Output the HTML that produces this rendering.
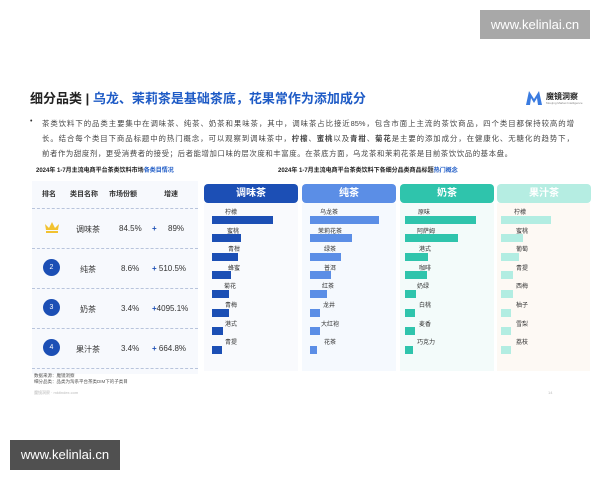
<!DOCTYPE html><html><head><meta charset="utf-8"><style>
body{margin:0;width:600px;height:480px;background:#fff;position:relative;overflow:hidden;font-family:"Liberation Sans","Noto Sans CJK SC",sans-serif;color:#333}
.a{position:absolute}
.wm{position:absolute;color:#fff;font-size:13px;text-align:center;line-height:29px}
.t{font-size:6px;white-space:nowrap}
.hd{position:absolute;top:184px;height:19px;width:94px;border-radius:4px;color:#fff;font-size:10px;font-weight:bold;text-align:center;line-height:19px}
.bar{position:absolute;height:8px}
.lb{position:absolute;font-size:6px;color:#333}
.row{position:absolute;left:32px;width:166px;height:39px;border-bottom:1px dashed #b8c4dc;font-size:8px}
.row span{position:absolute;top:15px}
.c{position:absolute;left:11px;top:10px;width:17px;height:17px;border-radius:50%;background:#1c4fb5;color:#fff;font-size:7px;text-align:center;line-height:17px}
.pl{position:absolute;left:42px;width:532px;font-size:7.4px;color:#444;white-space:nowrap;text-align:justify;text-align-last:justify}
</style></head><body>
<div class="wm" style="left:480px;top:10px;width:110px;background:#a8a8a8">www.kelinlai.cn</div>
<div class="wm" style="left:10px;top:440px;width:110px;height:30px;background:#505050">www.kelinlai.cn</div>

<div class="a" style="left:30px;top:88px;font-size:13px;font-weight:bold;white-space:nowrap"><span style="color:#222">细分品类 | </span><span style="color:#1e5bc6">乌龙、茉莉茶是基础茶底，花果常作为添加成分</span></div>
<svg class="a" style="left:525px;top:89px" width="18" height="17"><path d="M1 16 L4 2 L9 10 L14 2 L17 16 L13 16 L12 9 L9 14 L6 9 L5 16Z" fill="#3a7be0"/></svg>
<div class="a" style="left:546px;top:91px;font-size:8px;font-weight:bold;color:#222">魔镜洞察</div>
<div class="a" style="left:546px;top:101px;font-size:3px;color:#888">Moojing Market Intelligence</div>

<div class="a" style="left:30px;top:118px;font-size:7px">•</div>
<div class="pl" style="top:118px">茶类饮料下的品类主要集中在调味茶、纯茶、奶茶和果味茶，其中，调味茶占比接近85%，包含市面上主流的茶饮商品，四个类目都保持较高的增</div>
<div class="pl" style="top:133px">长。结合每个类目下商品标题中的热门概念，可以观察到调味茶中，<b>柠檬</b>、<b>蜜桃</b>以及<b>青柑</b>、<b>菊花</b>是主要的添加成分，在健康化、无糖化的趋势下，</div>
<div class="pl" style="top:148px;width:470px">前者作为甜度剂，更受消费者的接受；后者能增加口味的层次度和丰富度。在茶底方面，乌龙茶和茉莉花茶是目前茶饮饮品的基本盘。</div>

<div class="a t" style="left:36px;top:165px;font-weight:bold;color:#222">2024年 1-7月主流电商平台茶类饮料市场<span style="color:#1e5bc6">各类目情况</span></div>
<div class="a t" style="left:278px;top:165px;font-weight:bold;color:#222">2024年 1-7月主流电商平台茶类饮料下各细分品类商品标题<span style="color:#1e5bc6">热门概念</span></div>

<div class="a" style="left:32px;top:181px;width:166px;height:193px;background:#f7f9fd"></div>
<div class="row" style="top:181px;height:27px;font-weight:bold;font-size:7px"><span style="left:10px;top:8px">排名</span><span style="left:38px;top:8px">类目名称</span><span style="left:77px;top:8px">市场份额</span><span style="left:132px;top:8px">增速</span></div>
<div class="row" style="top:209px"><svg class="a" style="left:12px;top:12px" width="16" height="12"><path d="M1 3 L5 7 L8 1 L11 7 L15 3 L14 9 L2 9Z M2 10 H14 V12 H2Z" fill="#f2c230"/></svg><span style="left:44px">调味茶</span><span style="left:87px">84.5%</span><span style="left:120px;color:#1c4fb5;font-weight:bold">+</span><span style="left:136px">89%</span></div>
<div class="row" style="top:249px"><div class="c">2</div><span style="left:48px">纯茶</span><span style="left:89px">8.6%</span><span style="left:120px"><b style="color:#1c4fb5">+</b> 510.5%</span></div>
<div class="row" style="top:289px"><div class="c">3</div><span style="left:48px">奶茶</span><span style="left:89px">3.4%</span><span style="left:120px"><b style="color:#1c4fb5">+</b>4095.1%</span></div>
<div class="row" style="top:329px"><div class="c">4</div><span style="left:44px">果汁茶</span><span style="left:89px">3.4%</span><span style="left:120px"><b style="color:#1c4fb5">+</b> 664.8%</span></div>
<div class="a" style="left:34px;top:373px;font-size:4.5px;line-height:6px;color:#555">数据来源：魔镜洞察<br>细分品类：品类为淘系平台茶类DIM下的子类目</div>
<div class="a" style="left:34px;top:390px;font-size:4px;color:#bbb">魔镜洞察 · mktindex.com</div>

<div class="a" style="left:204px;top:203px;width:94px;height:168px;background:#f9fafd"></div>
<div class="a" style="left:302px;top:203px;width:94px;height:168px;background:#f5f9fe"></div>
<div class="a" style="left:400px;top:203px;width:94px;height:168px;background:#f3fbfa"></div>
<div class="a" style="left:497px;top:203px;width:93px;height:168px;background:#fdf9f4"></div>
<div class="hd" style="left:204px;background:#1c4fb5">调味茶</div>
<div class="hd" style="left:302px;background:#5b8ee6">纯茶</div>
<div class="hd" style="left:400px;background:#2fc4ac">奶茶</div>
<div class="hd" style="left:497px;background:#b5ede2;color:#fff">果汁茶</div>

<div id="bars"></div>
<script>
var cols=[[212,"#1c4fb5",[61,29,26,19,17,17,11,10],["柠檬","蜜桃","青柑","蜂蜜","菊花","青梅","港式","青提"],[225,227,228,228,224,225,225,225]],
[310,"#5b8ee6",[69,42,31,21,17,10,10,7],["乌龙茶","茉莉花茶","绿茶","普洱","红茶","龙井","大红袍","花茶"],[320,318,324,324,322,323,321,324]],
[405,"#2fc4ac",[71,53,23,22,11,10,10,8],["原味","阿萨姆","港式","咖啡","奶绿","白桃","麦香","巧克力"],[418,417,419,419,417,419,419,417]],
[501,"#b2ede2",[50,22,18,12,12,10,10,10],["柠檬","蜜桃","葡萄","青提","西梅","柚子","雪梨","荔枝"],[514,516,516,516,516,516,516,516]]];
var h="";cols.forEach(function(c){for(var i=0;i<8;i++){var y=207+i*18.6;h+='<div class="lb" style="left:'+c[4][i]+'px;top:'+y+'px">'+c[3][i]+'</div><div class="bar" style="left:'+c[0]+'px;top:'+(y+8.5)+'px;width:'+c[2][i]+'px;background:'+c[1]+'"></div>';}});
document.getElementById("bars").innerHTML=h;
</script>
<div class="a" style="left:548px;top:390px;font-size:4px;color:#bbb">14</div>
</body></html>
